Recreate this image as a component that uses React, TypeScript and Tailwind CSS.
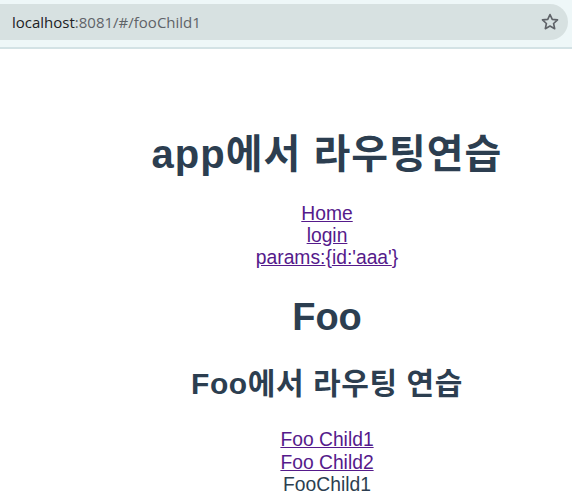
export default function App() {
  const font = { fontFamily: '"Liberation Sans", "Noto Sans CJK KR", sans-serif' }
  return (
    <div className="min-h-screen bg-white" style={font}>
      {/* browser chrome */}
      <div className="h-[49px] bg-[#eef7f8] pt-[4px] border-b-2 border-[#d3e2e5]">
        <div className="h-[36px] ml-[-20px] mr-[4px] bg-[#d7e1e1] rounded-r-[18px] flex items-center pl-[32px] pr-[8px]">
          <div className="flex-1 text-[15px] text-[#5f6368]" style={{ fontFamily: '"Open Sans", "Noto Sans", sans-serif' }}>
            <span className="text-[#202124]">localhost</span>:8081/#/fooChild1
          </div>
          <svg width="20" height="20" viewBox="0 0 24 24" fill="none" stroke="#5f6368" strokeWidth="2" strokeLinejoin="round">
            <path d="M12 3l2.7 5.8 6.3.7-4.7 4.3 1.3 6.2L12 16.9 6.4 20l1.3-6.2L3 9.5l6.3-.7z" />
          </svg>
        </div>
      </div>

      {/* app content */}
      <div className="pl-[82px] text-center text-[#2c3e50]">
        <h1 className="mt-[82px] text-[40px] leading-[46px] font-bold tracking-[1px]">app에서 라우팅연습</h1>
        <div className="mt-[26px] flex flex-col items-center text-[19.3px] leading-[22px]">
          <a href="#/" className="underline text-[#551a8b]">Home</a>
          <a href="#/login" className="underline text-[#551a8b]">login</a>
          <div className="text-[#551a8b]">
            <a href="#/params" className="underline">params:</a>{'{'}<a href="#/params" className="underline">id:'aaa'</a>{'}'}
          </div>
        </div>
        <h1 className="mt-[25px] text-[38px] leading-[46px] font-bold">Foo</h1>
        <h2 className="mt-[26px] text-[30px] leading-[36px] font-bold tracking-[0.6px]">Foo에서 라우팅 연습</h2>
        <div className="mt-[27px] flex flex-col items-center text-[19.3px] leading-[22.5px]">
          <a href="#/fooChild1" className="underline text-[#551a8b]">Foo Child1</a>
          <a href="#/fooChild2" className="underline text-[#551a8b]">Foo Child2</a>
          <div className="text-[#2c3e50]">FooChild1</div>
        </div>
      </div>
    </div>
  )
}
